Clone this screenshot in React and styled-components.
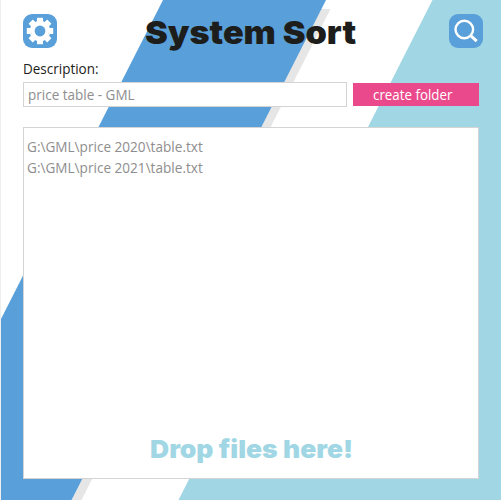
import React from "react";
import styled, { createGlobalStyle } from "styled-components";

const GlobalStyle = createGlobalStyle`
  * { box-sizing: border-box; }
  body { margin: 0; background: #fff; }
`;

const Page = styled.main`
  position: relative;
  width: 501px;
  height: 500px;
  padding: 14px 22px 21px 23px;
  display: flex;
  flex-direction: column;
  overflow: hidden;
  isolation: isolate;
  font-family: "Open Sans", sans-serif;
`;

const Backdrop = styled.svg`
  position: absolute;
  inset: 0;
  z-index: -1;
`;

const Header = styled.header`
  height: 35px;
  padding-right: 1px;
  margin-right: -5px;
  display: flex;
  justify-content: space-between;
  align-items: flex-start;
`;

const IconButton = styled.button`
  width: 34px;
  height: 34px;
  padding: 0;
  border: 0;
  border-radius: 9px;
  background: #599fd9;
  svg { display: block; }
`;

const Stretch = styled.span`
  display: inline-block;
  white-space: pre;
  transform-origin: 0 50%;
  transform: scaleX(${(p) => p.$x || 1});
`;

const Title = styled.h1`
  margin: 0;
  width: 217px;
  font: 900 32px/38px Inter, sans-serif;
  color: #1d1d1b;
`;

const Label = styled.label`
  height: 33px;
  padding-top: 10px;
  font-size: 14.5px;
  font-weight: 500;
  line-height: 20px;
  color: #1d1d1b;
`;

const FormRow = styled.div`
  display: grid;
  grid-template-columns: 324px 126px;
  gap: 6px;
  height: 24px;
`;

const Field = styled.div`
  padding-left: 4px;
  border: 1px solid #d4d4d4;
  background: #fff;
  font-size: 14.5px;
  font-weight: 500;
  line-height: 23px;
  color: #8e8e8e;
`;

const CreateButton = styled.button`
  margin: 1px 0;
  padding: 0 0 0 20px;
  border: 0;
  background: #ea4a8b;
  color: #fff;
  font: 500 14.5px/22px "Open Sans", sans-serif;
  text-align: left;
`;

const DropZone = styled.section`
  flex: 1;
  margin-top: 21px;
  padding: 8px 3px 0;
  border: 1px solid #d4d4d4;
  background: #fff;
  display: flex;
  flex-direction: column;
  justify-content: space-between;
`;

const FileList = styled.ul`
  margin: 0;
  padding: 0;
  list-style: none;
  font-size: 14.5px;
  font-weight: 500;
  line-height: 21px;
  color: #8e8e8e;
`;

const Hint = styled.p`
  margin: 0 0 13px 123px;
  font: 900 25px/32px Inter, sans-serif;
  color: #a1d7e4;
`;

const files = ["G:\\GML\\price 2020\\table.txt", "G:\\GML\\price 2021\\table.txt"];
const teeth = [0, 45, 90, 135, 180, 225, 270, 315];

export default function App() {
  return (
    <Page>
      <GlobalStyle />
      <Backdrop width="501" height="500" viewBox="0 0 501 500">
        <path d="M320 9H330.5L81.5 500H60Z" fill="#e6e6e6" />
        <path d="M163 0H326L71.5 500H1V319Z" fill="#599fd9" />
        <path d="M432.5 0H501V500H178.5Z" fill="#a1d7e4" />
        <path d="M.5 0V500" stroke="#eeeeee" />
      </Backdrop>
      <Header>
        <IconButton aria-label="Settings">
          <svg width="34" height="34" viewBox="-17 -17 34 34">
            <g fill="#fff">
              <circle r="10.3" />
              {teeth.map((a) => (
                <path key={a} d="M-3-13.2H3V-8H-3Z" transform={`rotate(${a})`} />
              ))}
            </g>
            <circle r="5.4" fill="#599fd9" />
          </svg>
        </IconButton>
        <Title><Stretch $x={1.068}>System Sort</Stretch></Title>
        <IconButton aria-label="Search">
          <svg width="34" height="34" fill="none" stroke="#fff" strokeWidth="2.4">
            <circle cx="15.3" cy="15.5" r="8.8" />
            <path d="M21.6 21.6L27.7 27.2" strokeWidth="3" />
          </svg>
        </IconButton>
      </Header>
      <Label><Stretch $x={0.93}>Description:</Stretch></Label>
      <FormRow>
        <Field><Stretch $x={0.93}>price table - GML</Stretch></Field>
        <CreateButton><Stretch $x={0.92}>create folder</Stretch></CreateButton>
      </FormRow>
      <DropZone>
        <FileList>
          {files.map((f) => <li key={f}><Stretch $x={0.937}>{f}</Stretch></li>)}
        </FileList>
        <Hint><Stretch $x={1.06}>Drop files here!</Stretch></Hint>
      </DropZone>
    </Page>
  );
}
